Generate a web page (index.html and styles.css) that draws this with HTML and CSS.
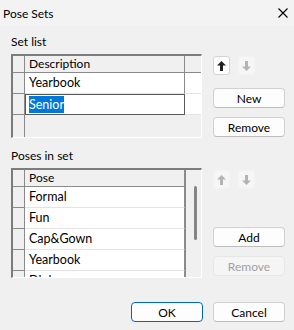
FILE: index.html
```html
<!DOCTYPE html>
<html lang="en">

<head>
    <meta charset="UTF-8">
    <link rel="stylesheet" href="styles.css">
</head>

<body>
    <div class="window">
        <div class="titlebar">
            <span class="title">Pose Sets</span>
            <svg class="close" width="10" height="10" viewBox="0 0 10 10">
                <path d="M0.5 0.5 L9.5 9.5 M9.5 0.5 L0.5 9.5" stroke="#000" stroke-width="1.1" fill="none" />
            </svg>
        </div>

        <div class="content">
            <div class="label">Set list</div>
            <div class="panel">
                <div class="grid set-grid">
                    <div class="row head">
                        <div class="rh"></div>
                        <div class="cell">Description</div>
                        <div class="cell-x"></div>
                    </div>
                    <div class="row">
                        <div class="rh"></div>
                        <div class="cell">Yearbook</div>
                        <div class="cell-x"></div>
                    </div>
                    <div class="row">
                        <div class="rh"></div>
                        <div class="cell editing"><span class="sel">Senior</span></div>
                        <div class="cell-x"></div>
                    </div>
                    <div class="filler">
                        <div class="rh"></div>
                    </div>
                </div>
                <div class="side">
                    <div class="arrows">
                        <button class="arrow">
                            <svg width="9" height="10" viewBox="0 0 9 10"><path d="M4.5 0 L9 4.5 H6 V10 H3 V4.5 H0 Z" fill="#202020" /></svg>
                        </button>
                        <button class="arrow" disabled>
                            <svg width="9" height="10" viewBox="0 0 9 10"><path d="M4.5 10 L9 5.5 H6 V0 H3 V5.5 H0 Z" fill="#b4b4b4" /></svg>
                        </button>
                    </div>
                    <button class="btn first">New</button>
                    <button class="btn">Remove</button>
                </div>
            </div>

            <div class="label second">Poses in set</div>
            <div class="panel">
                <div class="grid pose-grid">
                    <div class="table">
                        <div class="row head">
                            <div class="rh"></div>
                            <div class="cell">Pose</div>
                        </div>
                        <div class="row">
                            <div class="rh"></div>
                            <div class="cell">Formal</div>
                        </div>
                        <div class="row">
                            <div class="rh"></div>
                            <div class="cell">Fun</div>
                        </div>
                        <div class="row">
                            <div class="rh"></div>
                            <div class="cell">Cap&amp;Gown</div>
                        </div>
                        <div class="row">
                            <div class="rh"></div>
                            <div class="cell">Yearbook</div>
                        </div>
                        <div class="row">
                            <div class="rh"></div>
                            <div class="cell">Diploma</div>
                        </div>
                    </div>
                    <div class="scroll">
                        <div class="thumb"></div>
                    </div>
                </div>
                <div class="side">
                    <div class="arrows">
                        <button class="arrow" disabled>
                            <svg width="9" height="10" viewBox="0 0 9 10"><path d="M4.5 0 L9 4.5 H6 V10 H3 V4.5 H0 Z" fill="#b4b4b4" /></svg>
                        </button>
                        <button class="arrow" disabled>
                            <svg width="9" height="10" viewBox="0 0 9 10"><path d="M4.5 10 L9 5.5 H6 V0 H3 V5.5 H0 Z" fill="#b4b4b4" /></svg>
                        </button>
                    </div>
                    <button class="btn add">Add</button>
                    <button class="btn" disabled>Remove</button>
                </div>
            </div>

            <div class="footer">
                <button class="btn default">OK</button>
                <button class="btn">Cancel</button>
            </div>
        </div>
    </div>
</body>

</html>
```

FILE: styles.css
```css
body {
    margin: 0;
    font-family: 'Segoe UI', Lato, 'Noto Sans', sans-serif;
    font-size: 12px;
    color: #000;
    background-color: #f0f0f0;
}

.window {
    width: 294px;
    height: 330px;
    overflow: hidden;
}

.titlebar {
    height: 26px;
    display: flex;
    align-items: center;
    justify-content: space-between;
    padding: 0 6px 0 3px;
    background-color: #f3f3f3;
}

.title {
    font-size: 12px;
    margin-top: 1px;
}

.content {
    padding-left: 11px;
}

.label {
    height: 16px;
    line-height: 16px;
    margin-top: 8px;
}

.label.second {
    margin-top: 10px;
}

.panel {
    display: flex;
    margin-top: 4px;
}

/* grids */
.grid {
    width: 188px;
    box-sizing: content-box;
    border-top: 2px solid #7c7c7c;
    border-left: 2px solid #7c7c7c;
    border-right: 1px solid #fff;
    border-bottom: 1px solid #fff;
    background-color: #f0f0f0;
    overflow: hidden;
}

.set-grid {
    height: 81px;
    display: flex;
    flex-direction: column;
}

.pose-grid {
    height: 107px;
    display: flex;
}

.row {
    display: flex;
    height: 21px;
    flex-shrink: 0;
}

.row.head {
    height: 17px;
}

.rh {
    width: 11px;
    border-right: 1px solid #8a8a8a;
    border-bottom: 1px solid #8a8a8a;
    background-color: #f0f0f0;
}

.cell {
    width: 155px;
    padding-left: 4px;
    border-right: 1px solid #8a8a8a;
    border-bottom: 1px solid #e4e4e4;
    background-color: #fff;
    font-size: 12.5px;
    line-height: 20px;
    white-space: nowrap;
}

.cell-x {
    width: 16px;
    background-color: #fff;
    border-bottom: 1px solid #e4e4e4;
}

.head .cell,
.head .cell-x {
    background-color: #f0f0f0;
    border-bottom: 1px solid #8a8a8a;
    font-size: 12px;
    line-height: 16px;
}

.cell.editing {
    border: 1px solid #5a5a5a;
    padding-left: 3px;
    width: 155px;
    line-height: 19px;
}

.sel {
    background-color: #0078d7;
    color: #fff;
    padding: 1px 0;
}

.filler {
    flex: 1;
    display: flex;
}

.filler .rh {
    border-bottom: none;
}

.table {
    width: 172px;
}

.scroll {
    flex: 1;
    position: relative;
    border-left: 1px solid #8a8a8a;
}

.scroll .thumb {
    position: absolute;
    left: 8px;
    top: 16px;
    width: 3px;
    height: 54px;
    border-radius: 2px;
    background-color: #858585;
}

/* side buttons */
.side {
    width: 72px;
    margin-left: 11px;
    display: flex;
    flex-direction: column;
}

.arrows {
    display: flex;
    gap: 8px;
    margin-top: 2px;
}

.arrow {
    width: 17px;
    height: 19px;
    padding: 0;
    display: flex;
    align-items: center;
    justify-content: center;
    background-color: #fdfdfd;
    border: 1px solid #d4d4d4;
    border-radius: 3px;
}

.arrow:disabled {
    background-color: #f6f6f6;
    border-color: #f3f3f3;
}

.btn {
    width: 72px;
    height: 20px;
    padding: 0;
    margin-top: 9px;
    font-family: inherit;
    font-size: 12px;
    color: #000;
    background-color: #fdfdfd;
    border: 1px solid #d0d0d0;
    border-bottom-color: #bcbcbc;
    border-radius: 4px;
}

.btn.first {
    margin-top: 13px;
}

.btn.add {
    margin-top: 38px;
}

.btn:disabled {
    color: #a0a0a0;
    background-color: #f5f5f5;
    border-color: #e6e6e6;
}

.btn.default {
    border: 1px solid #0067c0;
}

.footer {
    display: flex;
    justify-content: flex-end;
    gap: 10px;
    margin-top: 24px;
    padding-right: 9px;
}

.footer .btn {
    margin-top: 0;
}
```
